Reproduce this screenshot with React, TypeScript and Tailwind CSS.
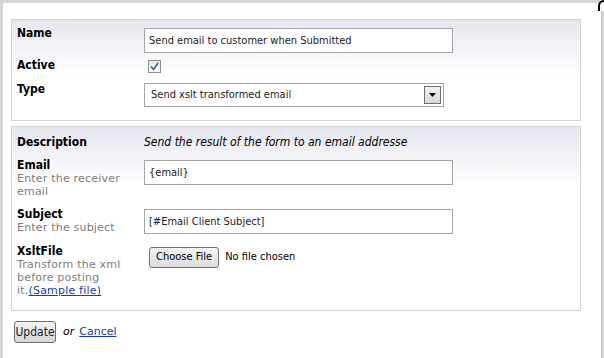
import React from "react";

const sub = "text-[11px] leading-[13px] tracking-[0.2px] text-[#7d7d7d] font-['DejaVu_Sans',sans-serif]";
const label = "text-[12px] leading-[14px] font-bold text-black font-['DejaVu_Sans_Condensed','DejaVu_Sans',sans-serif]";
const input =
  "h-[25px] w-[309px] border border-[#a5a5a5] bg-white px-[4px] text-[11px] text-[#222] font-['DejaVu_Sans_Condensed','DejaVu_Sans',sans-serif] outline-none";

function Row({ title, hint, children, className = "" }: { title: string; hint?: React.ReactNode; children: React.ReactNode; className?: string }) {
  return (
    <div className={`grid grid-cols-[127px_1fr] ${className}`}>
      <div>
        <div className={label}>{title}</div>
        {hint && <div className={sub}>{hint}</div>}
      </div>
      <div>{children}</div>
    </div>
  );
}

export default function App() {
  return (
    <div className="relative w-[604px] h-[358px] bg-[#d6d6d6] pt-[3px] pl-[3px] overflow-hidden">
      <div className="absolute top-0 right-0 w-[6px] h-[11px] border-l-[2px] border-t-[2px] border-black rounded-tl-[7px] bg-white" />
      <div className="w-[599px] h-[355px] bg-white border-r border-[#c4c4c4] pl-[8px] pt-[16px]">
        {/* General */}
        <div className="w-[570px] border border-[#d3d3d3] bg-gradient-to-b from-[#e6e6ef] to-white to-[55%] px-[5px] pt-[6px] pb-[13px]">
          <Row title="Name">
            <input className={`${input} h-[24px] mt-[1px]`} defaultValue="Send email to customer when Submitted" />
          </Row>
          <Row title="Active" className="mt-[5px]">
            <div className="mt-[2px] ml-[4px] w-[13px] h-[13px] border border-[#8b8b8b] bg-gradient-to-b from-[#e4e4e4] to-white flex items-center justify-center">
              <svg width="9" height="9" viewBox="0 0 9 9">
                <path d="M1 4.5 L3.5 7.5 L8 1" fill="none" stroke="#3a56a8" strokeWidth="1.6" />
              </svg>
            </div>
          </Row>
          <Row title="Type" className="mt-[9px]">
            <div className="mt-[1px] w-[300px] h-[24px] border border-[#a5a5a5] bg-white flex items-center justify-between pl-[6px] pr-[2px]">
              <span className="text-[11px] text-[#222] font-['DejaVu_Sans_Condensed','DejaVu_Sans',sans-serif]">Send xslt transformed email</span>
              <div className="w-[17px] h-[18px] border border-[#707070] bg-gradient-to-b from-[#f2f2f2] to-[#d8d8d8] flex items-center justify-center">
                <svg width="7" height="4" viewBox="0 0 7 4"><path d="M0 0 H7 L3.5 4 Z" fill="#000" /></svg>
              </div>
            </div>
          </Row>
        </div>

        {/* Action */}
        <div className="mt-[5px] w-[570px] h-[185px] border border-[#d3d3d3] bg-gradient-to-b from-[#e6e6ef] to-white to-[32%] px-[5px] pt-[8px]">
          <Row title="Description">
            <div className="text-[12px] italic text-black font-['DejaVu_Sans_Condensed','DejaVu_Sans',sans-serif] leading-[14px]">
              Send the result of the form to an email addresse
            </div>
          </Row>
          <Row title="Email" hint={<>Enter the receiver<br />email</>} className="mt-[9px]">
            <input className={input} defaultValue="{email}" />
          </Row>
          <Row title="Subject" hint="Enter the subject" className="mt-[9px]">
            <input className={input} defaultValue="[#Email Client Subject]" />
          </Row>
          <Row title="XsltFile" hint={<>Transform the xml<br />before posting<br />it,<a href="#" className="text-[#1a3aa8] underline">(Sample file)</a></>} className="mt-[10px]">
            <div className="flex items-center gap-[6px] pl-[5px] pt-[3px]">
              <button className="h-[21px] px-[6px] rounded-[3px] border border-[#707070] bg-gradient-to-b from-[#f4f4f4] to-[#dcdcdc] text-[11px] text-black font-['DejaVu_Sans_Condensed','DejaVu_Sans',sans-serif]">
                Choose File
              </button>
              <span className="text-[11px] text-black font-['DejaVu_Sans_Condensed','DejaVu_Sans',sans-serif]">No file chosen</span>
            </div>
          </Row>
        </div>

        <div className="mt-[10px] ml-[3px] flex items-center gap-[5px] text-[11px] font-['DejaVu_Sans',sans-serif]">
          <button className="h-[22px] w-[42px] rounded-[3px] border border-[#707070] bg-gradient-to-b from-[#f4f4f4] to-[#d4d4d4] text-[12px] text-[#222] font-['DejaVu_Sans_Condensed','DejaVu_Sans',sans-serif]">
            Update
          </button>
          <span className="italic ml-[2px]">or</span>
          <a href="#" className="text-[#1a3aa8] underline">Cancel</a>
        </div>
      </div>
    </div>
  );
}
